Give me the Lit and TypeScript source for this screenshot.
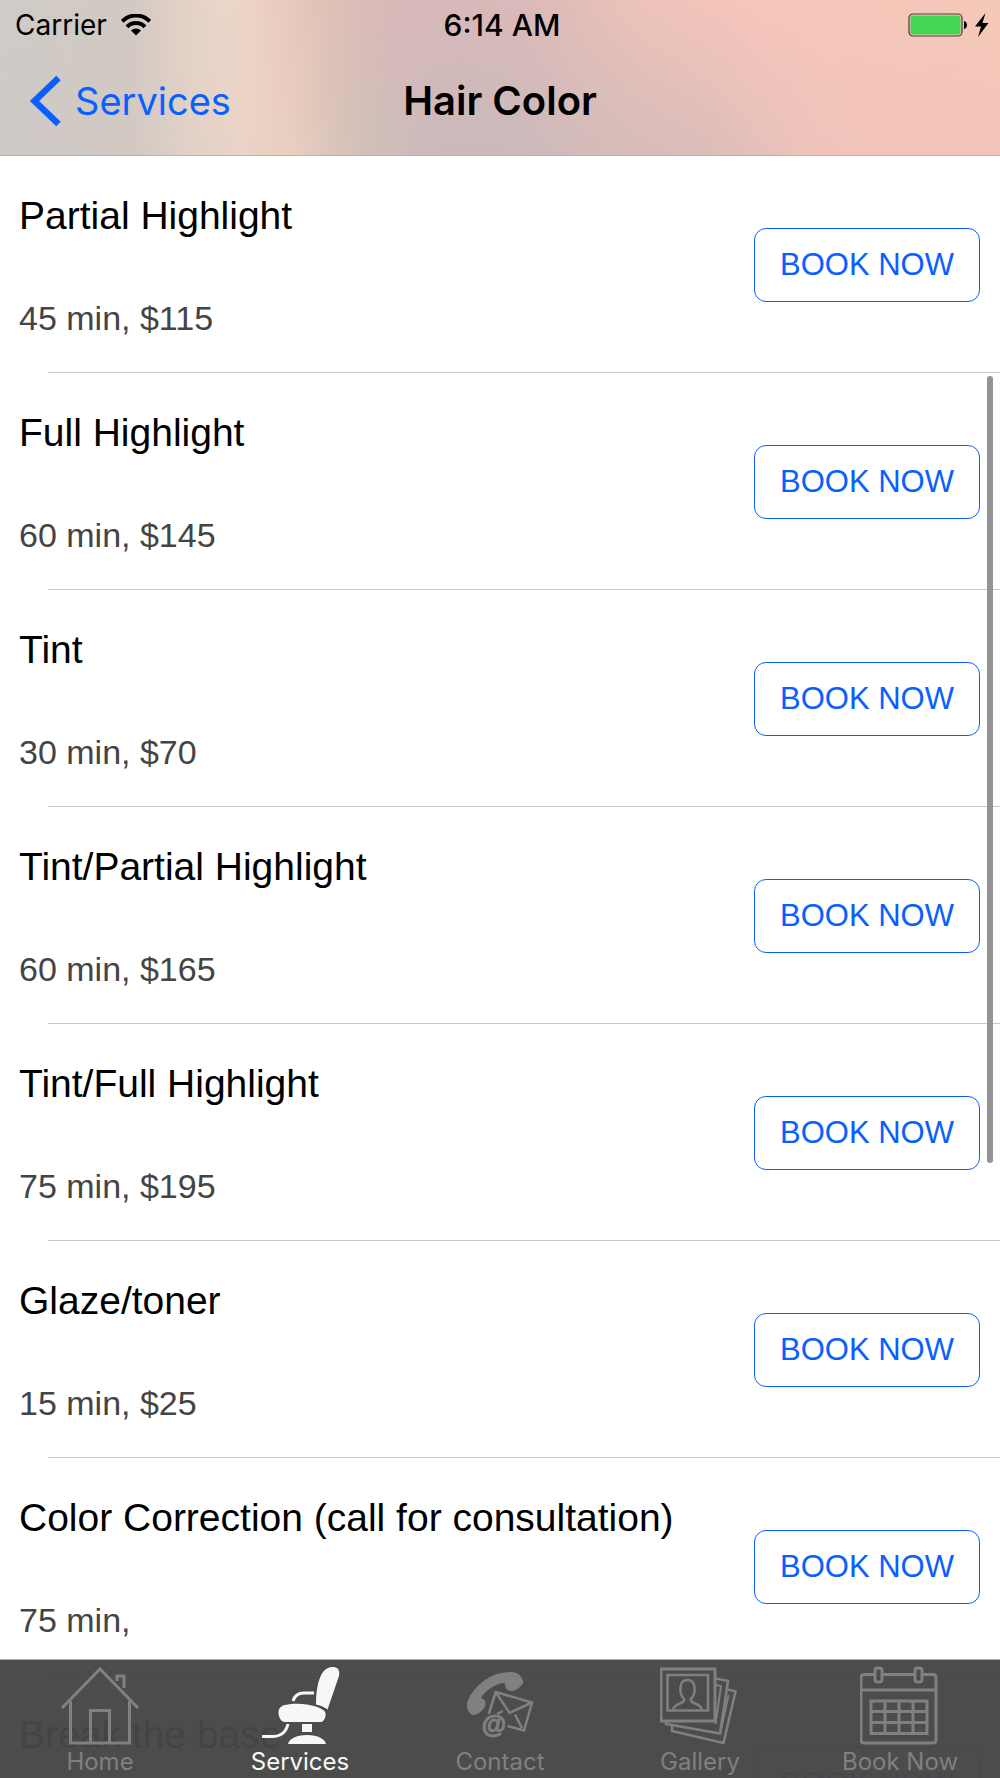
import { LitElement, html, svg, css } from "lit";
import { customElement, property } from "lit/decorators.js";
import { classMap } from "lit/directives/class-map.js";

interface Service {
  name: string;
  detail: string;
}

const SERVICES: Service[] = [
  { name: "Partial Highlight", detail: "45 min, $115" },
  { name: "Full Highlight", detail: "60 min, $145" },
  { name: "Tint", detail: "30 min, $70" },
  { name: "Tint/Partial Highlight", detail: "60 min, $165" },
  { name: "Tint/Full Highlight", detail: "75 min, $195" },
  { name: "Glaze/toner", detail: "15 min, $25" },
  { name: "Color Correction (call for consultation)", detail: "75 min," },
  { name: "Break the base", detail: "" },
];

const homeIcon = svg`
  <g fill="none" stroke="currentColor" stroke-width="3">
    <path d="M2 43 40 4l38 39" />
    <path d="M10.500 36v42h59V36" />
    <path d="M30.500 78V45.500h19V78" />
    <path d="M57 16v-5h7v12" />
  </g>`;

const chairIcon = svg`
  <g fill="currentColor">
    <path d="M56 39.500C56 26 58 14 63 7c3-4 7-5.500 11-5 4.500.700 6 4 5 9L67.500 44.500C64 42 60 40 56 39.500z" />
    <path d="M25 40c7-1.500 15-1.500 22-.500 7 1 13 3 17 6 3 3 1.500 8-1 10.500-.700.700-1.500 1-3 1H25c-4 0-6.500-5-6.500-9.500 0-4 2.500-6.800 6.500-7.500z" />
    <path d="M42 59h10v8H42z" />
    <path d="M28 79c1-5 8-9 19-9s18 4 19 9z" />
  </g>
  <g fill="none" stroke="currentColor" stroke-width="3">
    <path d="M33 36c1.500-5 5-8 11-8h10" />
    <path d="M2 71.500h10c8 0 14-4 16-12.500" />
  </g>`;

const contactIcon = svg`
  <path fill="currentColor" d="M12.700 50C8 48 6.500 43 7 38c3-10 12-20 23-26 7-3.500 14-5 21.700-5C57 7 62 11 63.500 17.500 60 23 55 26.500 50 26c-4-1.500-5-4-5-8-7-.500-20 7-24 15 4 1 5 4 4.500 7-2 6-8 10-12.800 10z" />
  <g fill="none" stroke="currentColor" stroke-width="2.500">
    <path d="M28.700 49 35.700 27 72 37.500l-8 28-16.500-4.500" />
    <path d="M35.700 27 49.500 48 72 37.500" />
    <path d="M55 49.500 62 63M43 46l-6 3" />
  </g>
  <text class="at" x="34" y="68" text-anchor="middle">@</text>`;

const galleryIcon = svg`
  <g fill="none" stroke="currentColor" stroke-width="3">
    <path d="M1 4h54v52H1z" />
    <path stroke-width="2.500" d="M7.500 10h40.500v35.500H7.500z" />
    <path stroke-width="2.500" d="M13 45c.500-4 4-5.500 8-7 3-1.200 3.500-2.500 3-4-3.500-3.500-4-8-3.500-12 .500-4.500 3-7 7-7s6.500 2.500 7 7c.500 4 0 8.500-3.500 12-.500 1.500 0 2.800 3 4 4 1.500 7.500 3 8 7" />
    <path stroke-width="2.500" d="M56 13.500l12 2.500-8 52.500-54-9.500v-3" />
    <path stroke-width="2" d="M56 20l5 1-5.500 38" />
    <path stroke-width="2.500" d="M68 24.500l7.500 2-12 51.500-51.500-12v-5" />
    <path stroke-width="2" d="M68.500 30l-8 37" />
  </g>`;

const calendarIcon = svg`
  <g fill="none" stroke="currentColor" stroke-width="3">
    <path d="M14 9.500H4q-3 0-3 3V75q0 3 3 3h69q3 0 3-3V12.500q0-3-3-3H63M22.500 9.500h32M1 25h75" />
    <rect x="15" y="3" width="7" height="14" rx="2.500" />
    <rect x="55" y="3" width="7" height="14" rx="2.500" />
    <path d="M11 36h56v32.500H11zM25 36v32.500M39 36v32.500M53 36v32.500M11 46.500h56M11 57.500h56" />
  </g>`;

const TABS = [
  { label: "Home", icon: homeIcon },
  { label: "Services", icon: chairIcon },
  { label: "Contact", icon: contactIcon },
  { label: "Gallery", icon: galleryIcon },
  { label: "Book Now", icon: calendarIcon },
];

@customElement("status-bar")
export class StatusBar extends LitElement {
  static styles = css`
    :host {
      display: grid;
      grid-template-columns: 1fr auto 1fr;
      align-items: center;
      height: 50px;
      padding: 0 11px 0 15px;
      font-size: 28px;
      line-height: 32px;
    }
    .left,
    .right {
      display: flex;
      align-items: center;
      gap: 14px;
    }
    .right {
      justify-content: flex-end;
    }
    .time {
      font-size: 30px;
      font-weight: 500;
    }
    svg {
      display: block;
    }
  `;

  render() {
    return html`
      <div class="left">
        <span>Carrier</span>
        <svg width="30" height="22" viewBox="0 0 30 22" aria-hidden="true">
          <g fill="none" stroke="#000" stroke-width="4">
            <path d="M1.200 7.300a19.500 19.500 0 0 1 27.600 0" />
            <path d="M6 12.800a12.700 12.700 0 0 1 18 0" />
          </g>
          <path d="M15 21.500l-5-5a7 7 0 0 1 10 0z" />
        </svg>
      </div>
      <time class="time">6:14 AM</time>
      <div class="right">
        <svg width="81" height="24" viewBox="0 0 81 24" aria-hidden="true">
          <rect x="1" y="1" width="53" height="22" rx="4" fill="none" stroke="#4a3835" stroke-width="1.200" />
          <rect x="2.500" y="2.500" width="50" height="19" rx="2.500" fill="#44d553" />
          <path d="M56 8c4 1 4 7 0 8z" />
          <path d="M77.500 0 67 13.500h6L70 24l10.500-14h-6z" />
        </svg>
      </div>
    `;
  }
}

@customElement("service-row")
export class ServiceRow extends LitElement {
  @property() name = "";
  @property() detail = "";

  static styles = css`
    :host {
      display: grid;
      grid-template-columns: 1fr auto;
      align-items: center;
      column-gap: 20px;
      padding: 0 20px 0 19px;
      height: 217px;
      box-sizing: border-box;
      background: linear-gradient(#c8c7cc, #c8c7cc) 48px 100% / 100% 1px no-repeat;
    }
    .text {
      display: grid;
      grid-template-rows: 48px 40px;
      row-gap: 58px;
    }
    .name {
      margin: 0;
      font-weight: 400;
      font-size: 39px;
      line-height: 48px;
      color: #000;
    }
    .detail {
      margin: 0;
      font-size: 34px;
      line-height: 40px;
      color: #444;
    }
    .book {
      width: 226px;
      height: 74px;
      padding: 0;
      border: 1px solid #0a60ff;
      border-radius: 12px;
      background: #fff;
      color: #0a60ff;
      font: inherit;
      font-size: 31px;
      line-height: 36px;
    }
  `;

  render() {
    return html`
      <div class="text">
        <h2 class="name">${this.name}</h2>
        <p class="detail">${this.detail}</p>
      </div>
      <button class="book" type="button">BOOK NOW</button>
    `;
  }
}

@customElement("tab-bar")
export class TabBar extends LitElement {
  @property() active = "Services";

  static styles = css`
    :host {
      display: block;
      background: rgba(70, 70, 70, 0.97);
      border-top: 1px solid #b2b2b2;
    }
    .tabs {
      display: grid;
      grid-template-columns: repeat(5, 1fr);
    }
    .tab {
      display: flex;
      flex-direction: column;
      align-items: center;
      gap: 3px;
      height: 118px;
      padding-top: 5px;
      box-sizing: border-box;
      color: #808080;
      text-decoration: none;
      font-size: 24px;
      line-height: 28px;
    }
    .tab.active {
      color: #f7f7f7;
    }
    .icon {
      display: block;
      width: 80px;
      height: 80px;
    }
    .at {
      font: bold 25px "Liberation Sans", sans-serif;
      fill: currentColor;
      stroke: currentColor;
      stroke-width: 1px;
    }
  `;

  render() {
    return html`
      <nav class="tabs">
        ${TABS.map(
          (tab) => html`
            <a class=${classMap({ tab: true, active: tab.label === this.active })} href="#">
              <svg class="icon" viewBox="0 0 80 80" aria-hidden="true">${tab.icon}</svg>
              <span>${tab.label}</span>
            </a>
          `,
        )}
      </nav>
    `;
  }
}

@customElement("app-root")
export class AppRoot extends LitElement {
  static styles = css`
    :host {
      display: grid;
      grid-template-columns: minmax(0, 1fr);
      grid-template-rows: auto 1fr auto;
      height: 100vh;
      overflow: hidden;
      background: #fff;
      color: #000;
      font-family: Inter, "Liberation Sans", sans-serif;
    }
    .header {
      position: relative;
      grid-row: 1;
      border-bottom: 1px solid #c0b2af;
      background: linear-gradient(
        90deg,
        #d0ccc8 0%,
        #d3c9c3 13%,
        #e2d1c6 18%,
        #ebd7ca 22%,
        #eed4c7 25%,
        #e7cabb 29%,
        #dfc1b7 33%,
        #dabab9 38%,
        #d9b9ba 46%,
        #dbbab9 52%,
        #edc3b9 64%,
        #f7c6bc 76%,
        #f6c8ba 88%,
        #f5c9b8 100%
      );
    }
    .header::before {
      content: "";
      position: absolute;
      inset: 0;
      background: linear-gradient(
        90deg,
        #cdc9c6 0%,
        #d2c8c2 13%,
        #e0d1c7 19%,
        #ead3c7 24%,
        #e9cec1 29%,
        #dac5b9 33%,
        #cfbfb8 37%,
        #c9b9bb 44%,
        #c9b9bb 50%,
        #d3bbb9 60%,
        #dcbdb9 71%,
        #efc3ba 82%,
        #f3c2b9 100%
      );
      mask-image: linear-gradient(transparent, #000);
    }
    .status {
      position: relative;
    }
    .nav {
      position: relative;
      display: grid;
      grid-template-columns: 1fr auto 1fr;
      align-items: center;
      height: 105px;
      padding: 0 29px 3px;
      box-sizing: border-box;
      font-size: 38px;
      line-height: 48px;
    }
    .back {
      display: flex;
      align-items: center;
      gap: 14px;
      color: #0a60ff;
      text-decoration: none;
    }
    .title {
      margin: 0;
      font-size: 40px;
      font-weight: 600;
    }
    .list {
      grid-row: 2 / 4;
      grid-column: 1;
      overflow: hidden;
      min-height: 0;
      font-family: "Liberation Sans", Arial, sans-serif;
    }
    .viewport {
      position: relative;
      grid-row: 2;
      grid-column: 1;
      pointer-events: none;
    }
    .thumb {
      position: absolute;
      top: 220px;
      right: 7px;
      width: 6px;
      height: 787px;
      border-radius: 3px;
      background: #939393;
    }
    .bar {
      grid-row: 3;
      grid-column: 1;
    }
  `;

  render() {
    return html`
      <header class="header">
        <status-bar class="status"></status-bar>
        <div class="nav">
          <a class="back" href="#">
            <svg width="32" height="52" viewBox="0 0 32 52" aria-hidden="true">
              <path d="M29.500 3 5.500 26l24 23" fill="none" stroke="currentColor" stroke-width="6.500" />
            </svg>
            <span>Services</span>
          </a>
          <h1 class="title">Hair Color</h1>
        </div>
      </header>
      <main class="list">
        ${SERVICES.map((s) => html`<service-row .name=${s.name} .detail=${s.detail}></service-row>`)}
      </main>
      <div class="viewport"><div class="thumb"></div></div>
      <tab-bar class="bar" active="Services"></tab-bar>
    `;
  }
}
